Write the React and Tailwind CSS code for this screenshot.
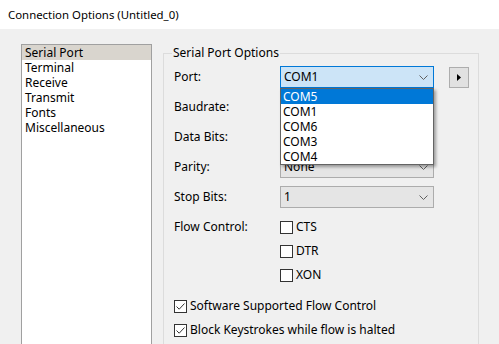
import React from "react";

const font = { fontFamily: '"Noto Sans", "Open Sans", sans-serif' };

function Chevron() {
  return (
    <svg width="9" height="5" viewBox="0 0 9 5" className="shrink-0">
      <path d="M0.5 0.5 L4.5 4.5 L8.5 0.5" fill="none" stroke="#606060" strokeWidth="1" />
    </svg>
  );
}

function Combo({ value, active }) {
  return (
    <div
      className={
        "w-[154px] h-[22px] flex items-center justify-between pl-[3px] pr-[5px] border " +
        (active ? "bg-[#cce4f7] border-[#0078d7]" : "bg-[#e5e5e5] border-[#acacac]")
      }
    >
      <span>{value}</span>
      <Chevron />
    </div>
  );
}

function Check({ checked }) {
  return (
    <div className="w-[13px] h-[13px] border border-[#333] bg-white flex items-center justify-center shrink-0">
      {checked && (
        <svg width="11" height="11" viewBox="0 0 11 11">
          <path d="M1.5 5.5 L4.2 8.2 L9.5 2.5" fill="none" stroke="#333" strokeWidth="1" />
        </svg>
      )}
    </div>
  );
}

export default function App() {
  const items = ["Serial Port", "Terminal", "Receive", "Transmit", "Fonts", "Miscellaneous"];
  const ports = ["COM5", "COM1", "COM6", "COM3", "COM4"];
  return (
    <div className="w-[499px] h-[344px] overflow-hidden text-[12px] text-black bg-[#f0f0f0]" style={font}>
      <div className="h-[29px] bg-white flex items-center pl-[8px] text-[11.4px]">Connection Options (Untitled_0)</div>
      <div className="flex pl-[21px] pt-[15px]">
        <div className="w-[131px] h-[320px] bg-white border border-[#a0a0a0] shrink-0">
          {items.map((it, i) => (
            <div
              key={it}
              className={"h-[15px] leading-[15px] pl-[3px] " + (i === 0 ? "bg-[#d9d5ce]" : "")}
            >
              {it}
            </div>
          ))}
        </div>
        <fieldset className="ml-[11px] w-[316px] h-[320px] border border-[#dcdcdc] mt-[1px] pl-[10px] shrink-0">
          <legend className="ml-[-2px] px-[1px] leading-[16px]">Serial Port Options</legend>
          <div className="relative mt-[5px]">
            <div className="flex flex-col gap-[8px]">
              {[
                ["Port:", "COM1", true],
                ["Baudrate:", "", false],
                ["Data Bits:", "", false],
                ["Parity:", "None", false],
                ["Stop Bits:", "1", false],
              ].map(([label, v, act]) => (
                <div key={label} className="flex items-center h-[22px]">
                  <div className="w-[106px]">{label}</div>
                  <Combo value={v} active={act} />
                  {act && (
                    <div className="ml-[15px] w-[20px] h-[21px] bg-[#e1e1e1] border border-[#adadad] flex items-center justify-center">
                      <svg width="4" height="7" viewBox="0 0 4 7">
                        <path d="M0 0 L4 3.5 L0 7 Z" fill="#000" />
                      </svg>
                    </div>
                  )}
                </div>
              ))}
            </div>
            <div className="absolute left-[106px] top-[22px] w-[154px] bg-white border border-[#646464] shadow-[2px_2px_3px_rgba(0,0,0,0.35)] z-10">
              {ports.map((p, i) => (
                <div
                  key={p}
                  className={
                    "h-[15px] leading-[15px] pl-[2px] " + (i === 0 ? "bg-[#0078d7] text-white" : "")
                  }
                >
                  {p}
                </div>
              ))}
            </div>
          </div>
          <div className="flex mt-[10px]">
            <div className="w-[106px] h-[18px] leading-[18px]">Flow Control:</div>
            <div className="flex flex-col gap-[6px]">
              {["CTS", "DTR", "XON"].map((t) => (
                <div key={t} className="flex items-center gap-[3px] h-[18px]">
                  <Check />
                  <span>{t}</span>
                </div>
              ))}
            </div>
          </div>
          <div className="flex flex-col gap-[6px] mt-[13px]">
            <div className="flex items-center gap-[3px] h-[18px]">
              <Check checked />
              <span>Software Supported Flow Control</span>
            </div>
            <div className="flex items-center gap-[3px] h-[18px]">
              <Check checked />
              <span>Block Keystrokes while flow is halted</span>
            </div>
          </div>
        </fieldset>
      </div>
    </div>
  );
}
